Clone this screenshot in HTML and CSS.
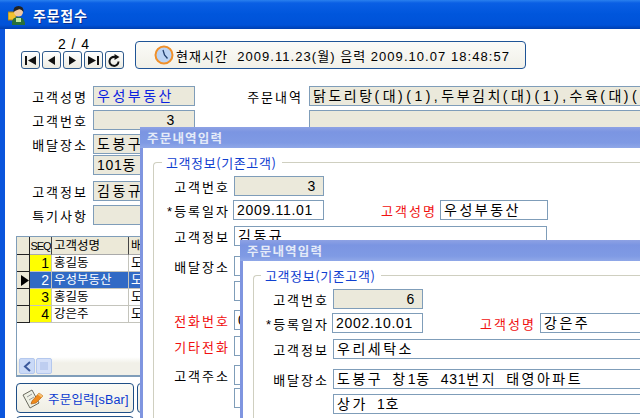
FILE: index.html
```html
<!DOCTYPE html>
<html lang="ko">
<head>
<meta charset="utf-8">
<title>주문접수</title>
<link rel="stylesheet" href="styles.css">
</head>
<body>
<div class="desk">
  <div class="main">
    <div class="titlebar">
      <svg class="appicon" width="18" height="20" viewBox="0 0 18 20">
        <rect x="0" y="7" width="8" height="8" fill="#f2c230" stroke="#a8801a" stroke-width="1"/>
        <path d="M4 18 Q4 12 10 12 Q16 12 17 18 L17 20 L4 20Z" fill="#27703a"/>
        <rect x="8" y="13" width="5" height="4" fill="#bfe8a0"/>
        <circle cx="10.500" cy="7" r="4.500" fill="#f0c8a0"/>
        <path d="M5.500 7 Q5 1 10.500 1 Q16 1 15.500 7 Q13 3.500 10.500 4.500 Q8 5 5.500 7Z" fill="#222"/>
      </svg>
      <span class="apptitle">주문접수</span>
    </div>
    <div class="body">
      <div class="toolbar">
        <div class="nav">
          <div class="page">2 / 4</div>
          <div class="navbtns">
            <button class="nb"><svg width="13" height="11" viewBox="0 0 13 11"><path d="M1 1h2v9H1zM12 1v9L4 5.500z" fill="#111"/></svg></button>
            <button class="nb"><svg width="11" height="11" viewBox="0 0 11 11"><path d="M9 1v9L2 5.500z" fill="#111"/></svg></button>
            <button class="nb"><svg width="11" height="11" viewBox="0 0 11 11"><path d="M2 1v9l7-4.500z" fill="#111"/></svg></button>
            <button class="nb"><svg width="13" height="11" viewBox="0 0 13 11"><path d="M10 1h2v9h-2zM1 1v9l8-4.500z" fill="#111"/></svg></button>
            <button class="nb"><svg width="13" height="13" viewBox="0 0 13 13"><path d="M10.500 7.500A4.500 4.500 0 1 1 7 3" fill="none" stroke="#111" stroke-width="2"/><path d="M6.500 0l5 3-5 3z" fill="#111"/></svg></button>
          </div>
        </div>
        <div class="clock">
          <svg class="clockicon" width="20" height="20" viewBox="0 0 20 20">
            <circle cx="10" cy="10" r="8.500" fill="#bcd4f4" stroke="#f0902a" stroke-width="2"/>
            <path d="M9 5l1.500 5 3 3.500" fill="none" stroke="#23406e" stroke-width="1.300"/>
          </svg>
          <span class="clocktext"><span class="kc">현재시간</span>  2009.11.23(<span class="kc">월</span>) <span class="kc">음력</span> 2009.10.07 18:48:57</span>
        </div>
      </div>

      <div class="mform">
        <div class="mrow">
          <span class="lab">고객성명</span>
          <span class="inp ro blue w102"><span class="k">우성부동산</span></span>
          <span class="lab rlab">주문내역</span>
          <span class="inp ro wide"><span class="k">닭도리탕</span>(<span class="k">대</span>)(1),<span class="k">두부김치</span>(<span class="k">대</span>)(1),<span class="k">수육</span>(<span class="k">대</span>)(</span>
        </div>
        <div class="mrow t4">
          <span class="lab">고객번호</span>
          <span class="inp ro num mnum w102">3</span>
          <span class="lab rlab"></span>
          <span class="inp ro wide"></span>
        </div>
        <div class="mrow t4">
          <span class="lab">배달장소</span>
          <span class="inp ro w102"><span class="k">도봉구</span></span>
        </div>
        <div class="mrow t1">
          <span class="lab"></span>
          <span class="inp ro w102">101<span class="k">동</span></span>
        </div>
        <div class="mrow t6">
          <span class="lab">고객정보</span>
          <span class="inp ro w102"><span class="k">김동규</span></span>
        </div>
        <div class="mrow t4">
          <span class="lab">특기사항</span>
          <span class="inp ro w102"></span>
        </div>
      </div>

      <div class="gridbox">
        <div class="grow ghead">
          <span class="c0"></span><span class="c1">SEQ</span><span class="c2">고객성명</span><span class="c3">배달</span>
        </div>
        <div class="grow">
          <span class="c0"></span><span class="c1 yel">1</span><span class="c2">홍길동</span><span class="c3">도</span>
        </div>
        <div class="grow sel">
          <span class="c0"><svg width="8" height="11" viewBox="0 0 8 11"><path d="M0 0v11l8-5.500z" fill="#000"/></svg></span><span class="c1">2</span><span class="c2">우성부동산</span><span class="c3">도</span>
        </div>
        <div class="grow">
          <span class="c0"></span><span class="c1 yel">3</span><span class="c2">홍길동</span><span class="c3">도</span>
        </div>
        <div class="grow">
          <span class="c0"></span><span class="c1 yel">4</span><span class="c2">강은주</span><span class="c3">도</span>
        </div>
        <div class="gfill"></div>
        <div class="scroll">
          <span class="sbtn"><svg width="8" height="11" viewBox="0 0 8 11"><path d="M7 1L2 5.500 7 10" fill="none" stroke="#3c5a9c" stroke-width="2"/></svg></span>
          <span class="sthumb"><svg width="9" height="8" viewBox="0 0 9 8"><path d="M1 0v8M3 0v8M5 0v8M7 0v8" stroke="#a8bce8"/></svg></span>
        </div>
      </div>

      <div class="cmds">
        <button class="cmd">
          <svg class="cmdicon" width="22" height="24" viewBox="0 0 22 24">
            <path d="M1 9L10 4l7 13-9 5z" fill="#eef0e4" stroke="#6b6b60"/>
            <path d="M5 11l5-3M7 14l5-3M9 17l3-2" stroke="#999"/>
            <path d="M10 15l7-8 4 3-7 7-5 1z" fill="#f08a1c" stroke="#a85a10" stroke-width=".6"/>
            <path d="M17 7l4 3-1.500 1.500-4-3z" fill="#f7c070"/>
          </svg>
          <span class="cmdtext">주문입력[sBar]</span>
        </button>
        <button class="cmd"></button>
      </div>
      <div class="cmds t3">
        <button class="cmd"></button>
      </div>
    </div>
  </div>

  <div class="win win2">
    <div class="wtitle">주문내역입력</div>
    <fieldset class="group">
      <legend>고객정보(기존고객)</legend>
      <div class="row">
        <span class="flab">고객번호</span><span class="inp ro num w90">3</span>
      </div>
      <div class="row t4">
        <span class="flab">*등록일자</span><span class="inp w91 pull">2009.11.01</span>
        <span class="flab red nlab">고객성명</span><span class="inp w108"><span class="k">우성부동산</span></span>
      </div>
      <div class="row t6">
        <span class="flab">고객정보</span><span class="inp w313"><span class="k">김동규</span></span>
      </div>
      <div class="row t10">
        <span class="flab">배달장소</span><span class="inp w313"></span>
      </div>
      <div class="row t5">
        <span class="flab"></span><span class="inp w313"></span>
      </div>
      <div class="row t9">
        <span class="flab red">전화번호</span><span class="inp w313">0</span>
      </div>
      <div class="row t6">
        <span class="flab red">기타전화</span><span class="inp w313"></span>
      </div>
      <div class="row t9">
        <span class="flab">고객주소</span><span class="inp w313"></span>
      </div>
      <div class="row t3">
        <span class="flab"></span><span class="inp w313"></span>
      </div>
    </fieldset>
  </div>

  <div class="win win3">
    <div class="wtitle">주문내역입력</div>
    <fieldset class="group">
      <legend>고객정보(기존고객)</legend>
      <div class="row">
        <span class="flab">고객번호</span><span class="inp ro num w90">6</span>
      </div>
      <div class="row t4">
        <span class="flab">*등록일자</span><span class="inp w91 pull">2002.10.01</span>
        <span class="flab red nlab">고객성명</span><span class="inp w200"><span class="k">강은주</span></span>
      </div>
      <div class="row t6">
        <span class="flab">고객정보</span><span class="inp wlong"><span class="k">우리세탁소</span></span>
      </div>
      <div class="row t10">
        <span class="flab">배달장소</span><span class="inp wlong"><span class="k">도봉구</span>  <span class="k">창</span>1<span class="k">동</span>  431<span class="k">번지</span>  <span class="k">태영아파트</span></span>
      </div>
      <div class="row t5">
        <span class="flab"></span><span class="inp wlong"><span class="k">상가</span>  1<span class="k">호</span></span>
      </div>
    </fieldset>
  </div>
</div>
</body>
</html>
```

FILE: styles.css
```css
* { box-sizing: border-box; }
html, body { margin: 0; padding: 0; }
body {
  font-family: "Liberation Sans", "Noto Sans CJK KR", sans-serif;
  font-size: 13px;
  color: #000;
  background: #fff;
}
.k { letter-spacing: 2.5px; }
.desk { position: relative; width: 640px; height: 418px; overflow: hidden; }

/* main window */
.main { width: 640px; height: 418px; display: flex; flex-direction: column; }
.titlebar {
  height: 29px;
  flex: none;
  display: flex;
  align-items: center;
  padding-left: 8px;
  background: linear-gradient(#2a80ee 0, #0a5fe4 3px, #0056dc 14px, #0052d8 25px, #003fb0 29px);
}
.appicon { flex: none; }
.apptitle {
  margin-left: 7px;
  color: #fff;
  font-family: "Noto Sans CJK KR", sans-serif;
  font-size: 14px;
  font-weight: 700;
  letter-spacing: .8px;
  text-shadow: 1px 1px 0 #0a2f90;
}
.body {
  flex: 1;
  border-left: 5px solid #0a55dc;
  padding: 12px 0 0 11px;
  overflow: hidden;
}
.toolbar { display: flex; align-items: flex-start; height: 45px; }
.nav { width: 114px; margin-left: 5px; }
.page { text-align: center; width: 105px; height: 10px; line-height: 6px; font-size: 14px; word-spacing: 2px; }
.navbtns { display: flex; gap: 2px; }
.nb {
  width: 19px;
  height: 18px;
  padding: 0;
  border: 1px solid #2f5a8c;
  border-radius: 3px;
  background: linear-gradient(#fff, #ecebe2);
  display: flex;
  align-items: center;
  justify-content: center;
}
.clock {
  width: 391px;
  height: 28px;
  border: 1px solid #1f5496;
  border-radius: 4px;
  background: linear-gradient(#fbfbf8, #f1f0e8);
  display: flex;
  align-items: center;
  padding-left: 18px;
}
.clockicon { flex: none; }
.clocktext { margin-left: 2px; font-size: 13px; letter-spacing: 1.05px; white-space: pre; }
.kc { letter-spacing: 1px; }

/* inputs */
.inp {
  display: block;
  flex: none;
  height: 20px;
  line-height: 18px;
  border: 1px solid #7f9db9;
  background: #fff;
  padding: 0 3px;
  font-size: 14px;
  letter-spacing: .7px;
  white-space: pre;
  overflow: hidden;
}
.ro { background: #ebe9db; }
.num { text-align: right; padding-right: 7px; }
.mnum { padding-right: 19px; }
.blue { color: #0a22e0; }
.w102 { width: 102px; }
.w90 { width: 90px; }
.w91 { width: 91px; }
.w108 { width: 108px; }
.w200 { width: 200px; }
.w313 { width: 313px; }
.wlong { width: 400px; }
.wide { width: 400px; letter-spacing: 3.5px; }

/* main form */
.mrow { display: flex; align-items: center; height: 20px; }
.t1 { margin-top: 1px; }
.t3 { margin-top: 3px; }
.t4 { margin-top: 4px; }
.t5 { margin-top: 5px; }
.t6 { margin-top: 6px; }
.t9 { margin-top: 9px; }
.t10 { margin-top: 10px; }
.lab {
  width: 72px;
  margin-right: 5px;
  text-align: right;
  letter-spacing: 2px;
  flex: none;
}
.rlab { width: 108px; margin-right: 6px; }

/* grid */
.gridbox {
  margin-top: 11px;
  width: 200px;
  height: 141px;
  border: 1px solid #7f9db9;
  border-bottom-width: 2px;
  display: flex;
  flex-direction: column;
}
.grow { display: flex; height: 17px; line-height: 17px; font-size: 12.500px; flex: none; }
.ghead { height: 18px; background: #ece9d8; line-height: 19px; }
.grow > span {
  display: block;
  flex: none;
  height: 100%;
  border-right: 1px solid #c4c4bc;
  border-bottom: 1px solid #c4c4bc;
  padding: 0 2px;
  overflow: hidden;
  white-space: nowrap;
}
.c0 { width: 13px; background: #ece9d8; border-right-color: #222 !important; border-bottom-color: #222 !important; }
.c1 { width: 22px; text-align: right; font-size: 14px; }
.c2 { width: 77px; }
.c3 { width: 80px; }
.ghead .c1 { font-size: 11px; letter-spacing: -1px; padding: 0; text-align: center; }
.ghead > span { border-right-color: #444; border-bottom-color: #aaa; }
.yel { background: #ffff00; }
.sel { background: #316ac5; color: #fff; }
.sel .c0 { background: #ece9d8; color: #000; padding: 2px 0 0 4px; }
.gfill { flex: 1; }
.scroll { flex: none; height: 18px; background: linear-gradient(#fff, #f1f0e8 6px); display: flex; gap: 1px; padding: 1px 2px; }
.sbtn, .sthumb {
  width: 16px;
  height: 16px;
  background: #c9d9f7;
  border: 1px solid #b4c8ee;
  border-radius: 2px;
  display: flex;
  align-items: center;
  justify-content: center;
}
.sthumb { background: #d5e0f8; }

/* command buttons */
.cmds { display: flex; gap: 3px; margin-top: 6px; }
.cmds.t3 { margin-top: 3px; }
.cmd {
  flex: none;
  width: 118px;
  height: 30px;
  padding: 0 0 0 5px;
  border: 1px solid #1f4f86;
  border-radius: 4px;
  background: linear-gradient(#fbfbf6, #efeee4);
  display: flex;
  align-items: center;
  font: inherit;
}
.cmdicon { flex: none; }
.cmdtext { margin-left: 4px; color: #0a3ad0; white-space: nowrap; font-size: 12.500px; letter-spacing: .2px; }

/* child windows */
.win {
  position: absolute;
  width: 640px;
  height: 400px;
  background: #fff;
  border: 3px solid #7f95e0;
  border-top: 0;
}
.win2 { left: 140px; top: 127px; }
.win3 { left: 240px; top: 240px; }
.wtitle {
  height: 21px;
  margin: 0 -3px;
  padding: 3px 0 0 7px;
  background: linear-gradient(#8ea2e4 0, #7b95e2 5px, #7f9ae4 16px, #90a8e8 21px);
  color: #e4eaf8;
  font-family: "Noto Sans CJK KR", sans-serif;
  font-size: 12.500px;
  font-weight: 700;
  letter-spacing: 1.2px;
  line-height: 16px;
}
.group {
  margin: 6px 0 0 10px;
  min-width: 0;
  width: 620px;
  height: 400px;
  padding: 5px 0 0 2px;
  border: 1px solid #cfcfc0;
  border-right: 0;
  border-radius: 4px 0 0 0;
}
.win3 .group { padding-left: 1px; }
.group legend {
  margin-left: 6px;
  padding: 0 6px 0 4px;
  color: #1040d0;
  font-family: "Noto Sans CJK KR", sans-serif;
  font-size: 13px;
  letter-spacing: .6px;
  line-height: 17px;
}
.row { display: flex; align-items: center; height: 20px; }
.flab {
  flex: none;
  width: 74px;
  margin-right: 5px;
  text-align: right;
  letter-spacing: 2px;
  white-space: nowrap;
}
.flab + .inp { margin-left: -1px; }
.red { color: #f01010; }
.flab + .pull { margin-left: -2px; }
.nlab { width: 54px; margin-left: 57px; margin-right: 6px; }
.win3 .nlab { margin-right: 7px; }
```
